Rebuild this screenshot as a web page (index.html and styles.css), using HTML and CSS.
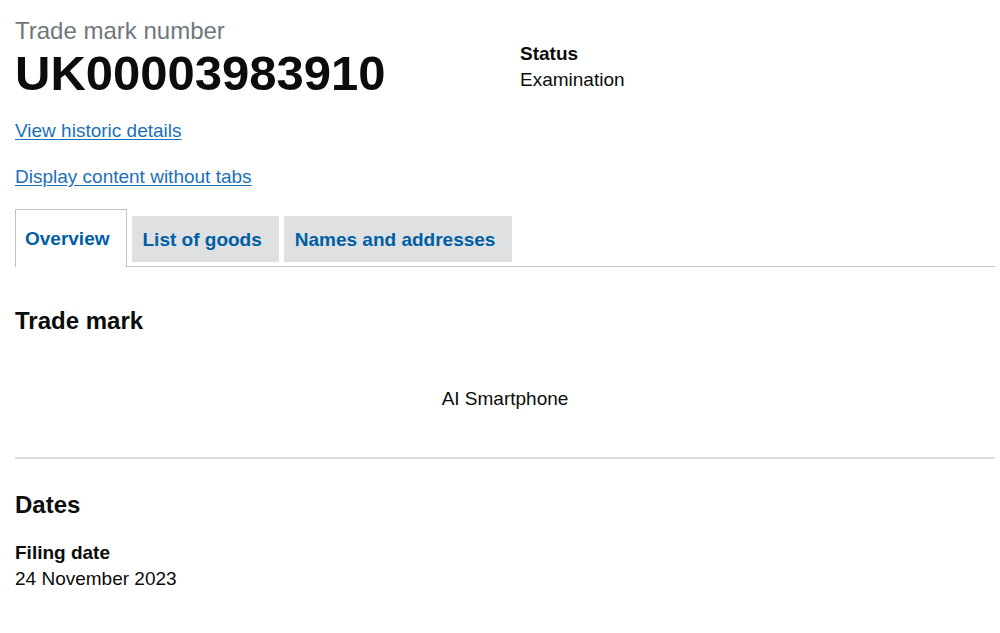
FILE: index.html
```html
<!DOCTYPE html>
<html lang="en">
<head>
<meta charset="utf-8">
<title>UK00003983910</title>
<link rel="stylesheet" href="styles.css">
</head>
<body>
<main class="page">
  <div class="header-row">
    <div class="header-main">
      <span class="caption">Trade mark number</span>
      <h1 class="title">UK00003983910</h1>
    </div>
    <div class="header-status">
      <dl class="status">
        <dt class="label">Status</dt>
        <dd class="value">Examination</dd>
      </dl>
    </div>
  </div>
  <p class="link-para"><a class="link" href="#">View historic details</a></p>
  <p class="link-para"><a class="link" href="#">Display content without tabs</a></p>

  <div class="tabs">
    <ul class="tab-list">
      <li class="tab tab-selected"><a class="tab-link" href="#">Overview</a></li>
      <li class="tab"><a class="tab-link" href="#">List of goods</a></li>
      <li class="tab"><a class="tab-link" href="#">Names and addresses</a></li>
    </ul>
    <section class="panel">
      <h2 class="section-title">Trade mark</h2>
      <p class="mark-text">AI Smartphone</p>
      <hr class="divider">
      <h2 class="section-title dates-title">Dates</h2>
      <dl class="fact">
        <dt class="label">Filing date</dt>
        <dd class="value">24 November 2023</dd>
      </dl>
    </section>
  </div>
</main>
</body>
</html>
```

FILE: styles.css
```css
* { box-sizing: border-box; }

html, body {
  margin: 0;
  padding: 0;
  background: #ffffff;
}

body {
  font-family: "Liberation Sans", Arial, sans-serif;
  color: #0b0c0c;
}

.page {
  padding: 16px 5px 0 15px;
}

.header-row {
  display: grid;
  grid-template-columns: 1fr 1fr;
  column-gap: 30px;
}

.header-main {
  display: flex;
  flex-direction: column;
}

.caption {
  font-size: 24px;
  line-height: 30px;
  color: #6f777b;
}

.title {
  margin: 0;
  font-size: 49px;
  line-height: 55px;
  font-weight: 700;
  color: #0b0c0c;
}

.header-status {
  padding-top: 25px;
}

.status, .fact {
  margin: 0;
}

.label {
  font-size: 19px;
  line-height: 26px;
  font-weight: 700;
}

.value {
  margin: 0;
  font-size: 19px;
  line-height: 26px;
}

.link-para {
  margin: 17px 0 0;
  font-size: 19px;
  line-height: 25px;
}

.link-para + .link-para {
  margin-top: 21px;
}

.link {
  color: #1d70b8;
  text-decoration: underline;
  text-underline-offset: 2px;
}

.tabs {
  margin-top: 20px;
}

.tab-list {
  list-style: none;
  margin: 0;
  padding: 0;
  display: flex;
  align-items: flex-end;
  border-bottom: 1px solid #bfc1c3;
}

.tab {
  margin: 0 5px 4px 0;
  padding: 11px 17px 10px 11px;
  background: #dee0e2;
  font-size: 19px;
  line-height: 25px;
  font-weight: 700;
}

.tab-selected {
  margin-bottom: -1px;
  padding: 16px 16px 16px 9px;
  background: #ffffff;
  border: 1px solid #bfc1c3;
  border-bottom: 0;
}

.tab-link {
  color: #005ea5;
  text-decoration: none;
}

.panel {
  padding-top: 39px;
}

.section-title {
  margin: 0;
  font-size: 24px;
  line-height: 30px;
  font-weight: 700;
}

.mark-text {
  margin: 50px 0 0;
  text-align: center;
  font-size: 19px;
  line-height: 25px;
}

.divider {
  margin: 46px 0 0;
  border: 0;
  border-top: 2px solid #dcdcdc;
}

.dates-title {
  margin-top: 31px;
}

.fact {
  margin-top: 20px;
}
```
